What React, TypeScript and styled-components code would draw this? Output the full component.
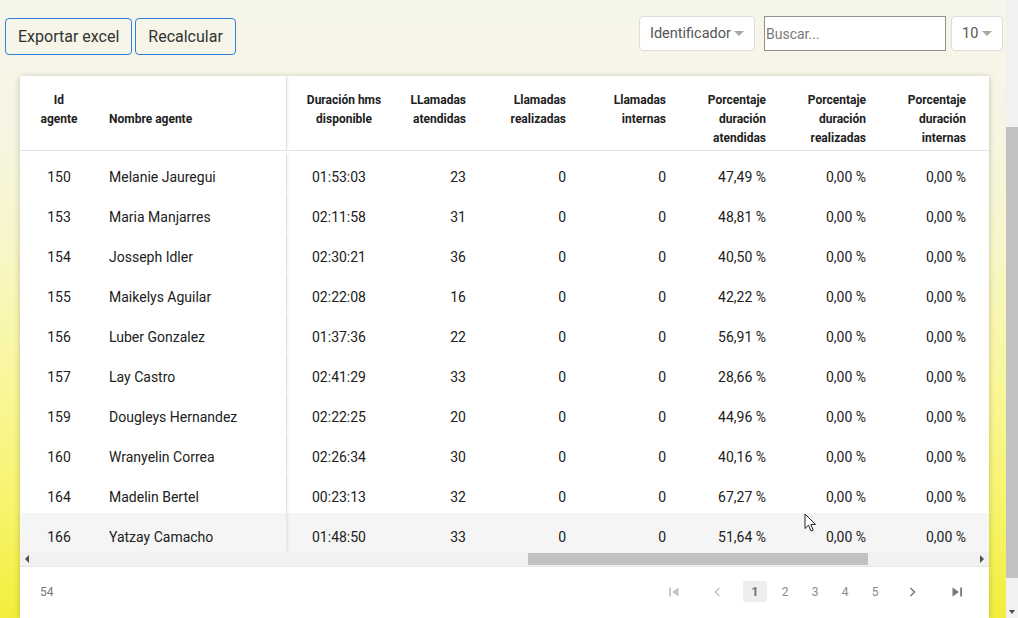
import React from "react";
import styled, { createGlobalStyle } from "styled-components";

const Global = createGlobalStyle`
  html, body { margin: 0; padding: 0; }
  body { font-family: Roboto, "Liberation Sans", Arial, sans-serif; color: #212121; }
  #root { height: 618px; }
  * { box-sizing: border-box; }
`;

const Page = styled.div`
  position: relative;
  display: flex;
  height: 618px;
  width: 1018px;
  overflow: hidden;
`;

const Main = styled.div`
  flex: 1;
  display: flex;
  flex-direction: column;
  padding: 16px 3px 0 5px;
  background: linear-gradient(
    to bottom,
    #f6f5ea 0%,
    #f6f5e4 20%,
    #f8f6c8 40%,
    #f9f79a 62%,
    #f7f46c 82%,
    #f2ee3c 100%
  );
`;

const Toolbar = styled.div`
  display: flex;
  align-items: flex-start;
  justify-content: space-between;
  height: 39px;
`;

const ButtonGroup = styled.div`
  display: flex;
  gap: 3px;
  margin-top: 2px;
`;

const OutlineButton = styled.button`
  height: 37px;
  padding: 0 12px;
  border: 1px solid #2f7fdc;
  border-radius: 4px;
  background: transparent;
  font-family: Roboto, "Liberation Sans", sans-serif;
  font-size: 16px;
  color: #333;
`;

const Controls = styled.div`
  display: flex;
  align-items: center;
`;

const SelectBox = styled.div<{ $w: number; $ml: number }>`
  width: ${(p) => p.$w}px;
  margin-left: ${(p) => p.$ml}px;
  height: 35px;
  display: flex;
  align-items: center;
  justify-content: space-between;
  padding: 0 10px 0 10px;
  background: #fff;
  border: 1px solid #dcdcdc;
  border-radius: 4px;
  font-size: 14.5px;
  color: #555;
`;

const Caret = styled.span`
  width: 0;
  height: 0;
  border-left: 5px solid transparent;
  border-right: 5px solid transparent;
  border-top: 5px solid #a8a8a8;
`;

const SearchInput = styled.input`
  width: 182px;
  height: 35px;
  margin-left: 9px;
  padding: 0 1px;
  border: 1px solid #8f8f8f;
  border-radius: 0;
  background: #fff;
  font-family: Roboto, "Liberation Sans", sans-serif;
  font-size: 14px;
  color: #333;
  outline: none;
  &::placeholder { color: #7a7a7a; }
`;

const Card = styled.div`
  margin: 21px 0 0 15px;
  width: 969px;
  flex: 1;
  background: #fff;
  box-shadow: 0 1px 6px rgba(0, 0, 0, 0.22);
  display: flex;
  flex-direction: column;
`;

const COLS = "78px 189px 106px 89px 100px 100px 100px 100px 100px 7px";

const stickyEdge = `
  border-right: 1px solid #e4e4e4;
  box-shadow: 3px 0 2px -2px rgba(0, 0, 0, 0.08);
`;

const HeadRow = styled.div`
  display: grid;
  grid-template-columns: ${COLS};
  height: 75px;
  border-bottom: 1px solid #e4e4e4;
`;

type Align = "left" | "center" | "right";

const HeadCell = styled.div<{
  $align: Align;
  $pt?: number;
  $sticky?: boolean;
  $pl?: number;
  $pr?: number;
}>`
  padding: ${(p) => p.$pt ?? 15}px ${(p) => p.$pr ?? 16}px 0 ${(p) => p.$pl ?? 16}px;
  text-align: ${(p) => p.$align};
  font-size: 12px;
  font-weight: 700;
  line-height: 19px;
  color: #212121;
  white-space: nowrap;
  ${(p) => (p.$sticky ? stickyEdge : "")}
`;

const Body = styled.div`
  padding-top: 2px;
  height: 401px;
  overflow: hidden;
`;

const Row = styled.div<{ $hover?: boolean }>`
  display: grid;
  grid-template-columns: ${COLS};
  height: 40px;
  background: ${(p) => (p.$hover ? "#f5f5f5" : "#fff")};
`;

const Cell = styled.div<{ $align: Align; $sticky?: boolean; $pl?: number; $pr?: number }>`
  padding: 14px ${(p) => p.$pr ?? 16}px 6px ${(p) => p.$pl ?? 16}px;
  text-align: ${(p) => p.$align};
  font-size: 14px;
  line-height: 20px;
  color: #212121;
  white-space: nowrap;
  ${(p) => (p.$sticky ? stickyEdge : "")}
`;

const HScroll = styled.div`
  height: 15px;
  display: flex;
  align-items: center;
  background: #f1f1f1;
  border-bottom: 1px solid #e6e6e6;
  padding: 0 4px;
`;

const ArrowL = styled.span`
  width: 0;
  height: 0;
  border-top: 4px solid transparent;
  border-bottom: 4px solid transparent;
  border-right: 4px solid #505050;
  margin-left: 1px;
`;

const ArrowR = styled.span`
  width: 0;
  height: 0;
  border-top: 4px solid transparent;
  border-bottom: 4px solid transparent;
  border-left: 4px solid #505050;
  margin-right: 1px;
`;

const HTrack = styled.div`
  flex: 1;
  display: flex;
  align-items: center;
  height: 100%;
  padding-left: 499px;
  padding-right: 112px;
`;

const HThumb = styled.div`
  flex: 1;
  height: 12px;
  background: #c1c1c1;
`;

const Footer = styled.div`
  flex: 1;
  display: flex;
  justify-content: space-between;
  align-items: flex-start;
  padding: 14px 20px 0 20px;
`;

const Count = styled.span`
  font-size: 12px;
  line-height: 22px;
  color: #777;
`;

const Pager = styled.div`
  display: flex;
  align-items: center;
`;

const PageBtn = styled.div<{ $active?: boolean; $ml?: number }>`
  width: 24px;
  height: 21px;
  margin-left: ${(p) => p.$ml ?? 6}px;
  display: flex;
  align-items: center;
  justify-content: center;
  border-radius: 2px;
  font-size: 12px;
  font-weight: ${(p) => (p.$active ? 700 : 400)};
  color: ${(p) => (p.$active ? "#6f6f6f" : "#8a8a8a")};
  background: ${(p) => (p.$active ? "#eeeeee" : "transparent")};
`;

const IconBtn = styled.div<{ $ml?: number; $color: string }>`
  width: 24px;
  height: 21px;
  margin-left: ${(p) => p.$ml ?? 0}px;
  display: flex;
  align-items: center;
  justify-content: center;
  color: ${(p) => p.$color};
`;

const PageScroll = styled.div`
  width: 12px;
  display: flex;
  flex-direction: column;
  background: #f1f1f1;
`;

const VThumb = styled.div`
  margin-top: 127px;
  height: 451px;
  background: #c1c1c1;
`;

const VFill = styled.div`
  flex: 1;
`;

const VArrow = styled.div`
  height: 13px;
  display: flex;
  align-items: center;
  justify-content: center;
  &::after {
    content: "";
    border-left: 3px solid transparent;
    border-right: 3px solid transparent;
    border-top: 4px solid #505050;
  }
`;

const Cursor = styled.svg`
  position: absolute;
  left: 804px;
  top: 513px;
  pointer-events: none;
`;

type RowData = [string, string, string, string, string];
const rows: RowData[] = [
  ["150", "Melanie Jauregui", "01:53:03", "23", "47,49 %"],
  ["153", "Maria Manjarres", "02:11:58", "31", "48,81 %"],
  ["154", "Josseph Idler", "02:30:21", "36", "40,50 %"],
  ["155", "Maikelys Aguilar", "02:22:08", "16", "42,22 %"],
  ["156", "Luber Gonzalez", "01:37:36", "22", "56,91 %"],
  ["157", "Lay Castro", "02:41:29", "33", "28,66 %"],
  ["159", "Dougleys Hernandez", "02:22:25", "20", "44,96 %"],
  ["160", "Wranyelin Correa", "02:26:34", "30", "40,16 %"],
  ["164", "Madelin Bertel", "00:23:13", "32", "67,27 %"],
  ["166", "Yatzay Camacho", "01:48:50", "33", "51,64 %"],
];

const FirstIcon = () => (
  <svg width="12" height="12" viewBox="0 0 12 12">
    <rect x="1" y="1.5" width="1.8" height="9" fill="currentColor" />
    <path d="M10.5 1.5 L4 6 L10.5 10.5 Z" fill="currentColor" />
  </svg>
);
const LastIcon = () => (
  <svg width="12" height="12" viewBox="0 0 12 12">
    <rect x="9.2" y="1.5" width="1.8" height="9" fill="currentColor" />
    <path d="M1.5 1.5 L8 6 L1.5 10.5 Z" fill="currentColor" />
  </svg>
);
const PrevIcon = () => (
  <svg width="12" height="12" viewBox="0 0 12 12">
    <path d="M7.5 2 L3.5 6 L7.5 10" fill="none" stroke="currentColor" strokeWidth="1.5" />
  </svg>
);
const NextIcon = () => (
  <svg width="12" height="12" viewBox="0 0 12 12">
    <path d="M4.5 2 L8.5 6 L4.5 10" fill="none" stroke="currentColor" strokeWidth="1.5" />
  </svg>
);

export default function App() {
  return (
    <>
      <Global />
      <Page>
        <Main>
          <Toolbar>
            <ButtonGroup>
              <OutlineButton>Exportar excel</OutlineButton>
              <OutlineButton>Recalcular</OutlineButton>
            </ButtonGroup>
            <Controls>
              <SelectBox $w={116} $ml={0}>
                Identificador
                <Caret />
              </SelectBox>
              <SearchInput placeholder="Buscar..." />
              <SelectBox $w={52} $ml={5}>
                10
                <Caret />
              </SelectBox>
            </Controls>
          </Toolbar>
          <Card>
            <HeadRow>
              <HeadCell $align="center" $pl={0} $pr={0}>
                Id
                <br />
                agente
              </HeadCell>
              <HeadCell $align="left" $pl={11} $pt={34} $sticky>
                Nombre agente
              </HeadCell>
              <HeadCell $align="center" $pl={16} $pr={8}>
                Duración hms
                <br />
                disponible
              </HeadCell>
              <HeadCell $align="right" $pl={0}>
                LLamadas
                <br />
                atendidas
              </HeadCell>
              <HeadCell $align="right" $pl={0}>
                Llamadas
                <br />
                realizadas
              </HeadCell>
              <HeadCell $align="right" $pl={0}>
                Llamadas
                <br />
                internas
              </HeadCell>
              <HeadCell $align="right" $pl={0}>
                Porcentaje
                <br />
                duración
                <br />
                atendidas
              </HeadCell>
              <HeadCell $align="right" $pl={0}>
                Porcentaje
                <br />
                duración
                <br />
                realizadas
              </HeadCell>
              <HeadCell $align="right" $pl={0}>
                Porcentaje
                <br />
                duración
                <br />
                internas
              </HeadCell>
              <div />
            </HeadRow>
            <Body>
              {rows.map((r, i) => (
                <Row key={r[0]} $hover={i === rows.length - 1}>
                  <Cell $align="center" $pl={0} $pr={0}>
                    {r[0]}
                  </Cell>
                  <Cell $align="left" $pl={11} $sticky>
                    {r[1]}
                  </Cell>
                  <Cell $align="center" $pl={14}>
                    {r[2]}
                  </Cell>
                  <Cell $align="right">{r[3]}</Cell>
                  <Cell $align="right">0</Cell>
                  <Cell $align="right">0</Cell>
                  <Cell $align="right">{r[4]}</Cell>
                  <Cell $align="right">0,00 %</Cell>
                  <Cell $align="right">0,00 %</Cell>
                  <div />
                </Row>
              ))}
            </Body>
            <HScroll>
              <ArrowL />
              <HTrack>
                <HThumb />
              </HTrack>
              <ArrowR />
            </HScroll>
            <Footer>
              <Count>54</Count>
              <Pager>
                <IconBtn $color="#c4c4c4">
                  <FirstIcon />
                </IconBtn>
                <IconBtn $color="#c4c4c4" $ml={20}>
                  <PrevIcon />
                </IconBtn>
                <PageBtn $active $ml={13}>
                  1
                </PageBtn>
                <PageBtn>2</PageBtn>
                <PageBtn>3</PageBtn>
                <PageBtn>4</PageBtn>
                <PageBtn>5</PageBtn>
                <IconBtn $color="#777" $ml={13}>
                  <NextIcon />
                </IconBtn>
                <IconBtn $color="#777" $ml={21}>
                  <LastIcon />
                </IconBtn>
              </Pager>
            </Footer>
          </Card>
        </Main>
        <PageScroll>
          <VThumb />
          <VFill />
          <VArrow />
        </PageScroll>
        <Cursor width="13" height="20" viewBox="0 0 13 20">
          <path
            d="M1 1 L1 15.5 L4.5 12.2 L7 18 L9.2 17 L6.8 11.4 L11.5 11.4 Z"
            fill="#fff"
            stroke="#222"
            strokeWidth="1"
            strokeLinejoin="round"
          />
        </Cursor>
      </Page>
    </>
  );
}
